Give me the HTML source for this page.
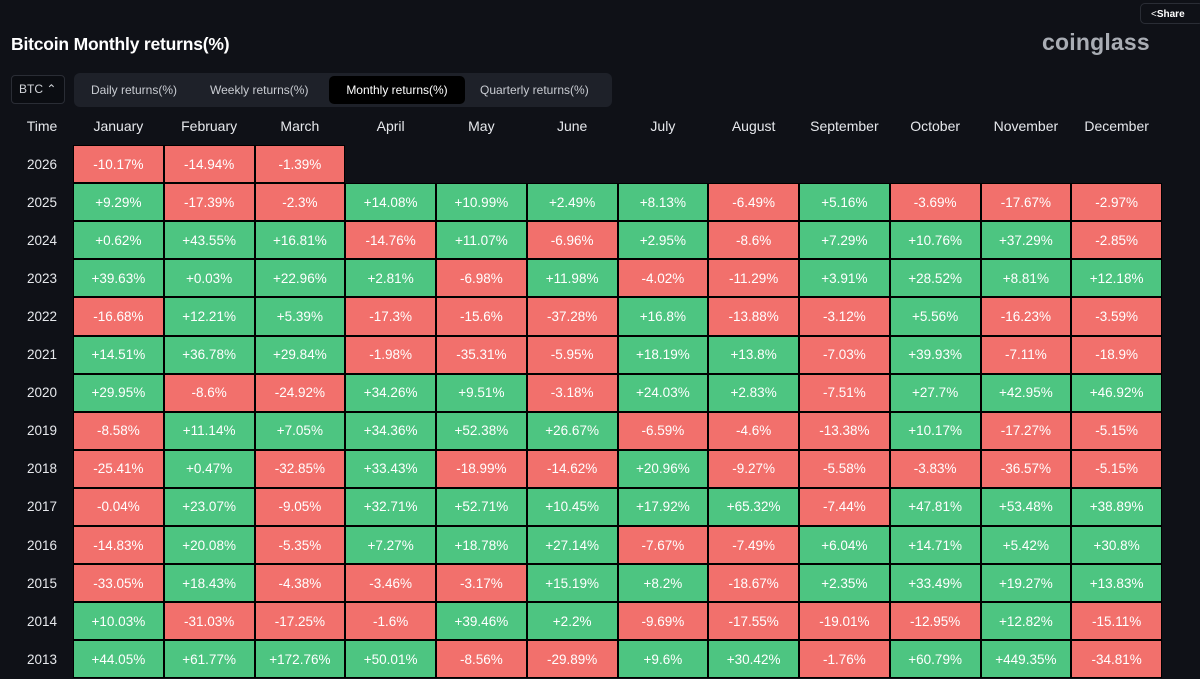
<!DOCTYPE html>
<html><head><meta charset="utf-8"><style>
body{margin:0;width:1200px;height:679px;background:#0f1117;overflow:hidden;font-family:"Liberation Sans",sans-serif;color:#e6e8ec;position:relative}
.title{position:absolute;left:11px;top:34px;font-size:17.5px;font-weight:bold;color:#fff;letter-spacing:-0.2px}
.logo{position:absolute;left:1042px;top:29px;font-size:23px;font-weight:bold;color:#a9adb4;letter-spacing:0.2px}
.share{position:absolute;left:1140px;top:3px;width:64px;height:21px;border:1px solid #2a2d35;border-radius:5px;font-size:10px;font-weight:bold;color:#fff;line-height:21px;padding-left:10px;box-sizing:border-box}
.btc{position:absolute;left:11px;top:75px;width:54px;height:29px;border:1px solid #2a2d35;border-radius:4px;box-sizing:border-box;background:#0b0d12;font-size:12px;line-height:27px;padding-left:7px;color:#d0d3d8}
.tabs{position:absolute;left:74px;top:73px;width:538px;height:34px;background:#1e2129;border-radius:6px}
.tab{position:absolute;top:3px;height:28px;line-height:28px;font-size:12px;color:#c9ccd2}
.tab.on{background:#000;border-radius:5px;color:#fff}
table{position:absolute;left:10px;top:106px;border-collapse:separate;border-spacing:2px;table-layout:fixed}
td,th{padding:0;text-align:center;font-size:13.5px;height:36.1px}
th{font-weight:normal;color:#e6e8ec;font-size:14px}
td.y{width:60px;color:#e6e8ec;font-size:13.5px}
td.r,td.g{color:#fff;box-shadow:0 0 0 1px #000}
td.r{background:#f2706c}
td.g{background:#4dc581}
col.m{width:88.75px}
</style></head><body>
<div class="share"><span style="font-weight:normal">&lt;</span>Share</div>
<div class="title">Bitcoin Monthly returns(%)</div>
<div class="logo">coinglass</div>
<div class="btc">BTC ⌃</div>
<div class="tabs">
<div class="tab" style="left:17px">Daily returns(%)</div>
<div class="tab" style="left:136px">Weekly returns(%)</div>
<div class="tab on" style="left:255px;width:136px;text-align:center">Monthly returns(%)</div>
<div class="tab" style="left:406px">Quarterly returns(%)</div>
</div>
<table>
<colgroup><col style="width:60px"><col class="m"><col class="m"><col class="m"><col class="m"><col class="m"><col class="m"><col class="m"><col class="m"><col class="m"><col class="m"><col class="m"><col class="m"></colgroup>
<tr><th>Time</th><th>January</th><th>February</th><th>March</th><th>April</th><th>May</th><th>June</th><th>July</th><th>August</th><th>September</th><th>October</th><th>November</th><th>December</th></tr>
<tr><td class="y">2026</td><td class="r">-10.17%</td><td class="r">-14.94%</td><td class="r">-1.39%</td><td></td><td></td><td></td><td></td><td></td><td></td><td></td><td></td><td></td></tr>
<tr><td class="y">2025</td><td class="g">+9.29%</td><td class="r">-17.39%</td><td class="r">-2.3%</td><td class="g">+14.08%</td><td class="g">+10.99%</td><td class="g">+2.49%</td><td class="g">+8.13%</td><td class="r">-6.49%</td><td class="g">+5.16%</td><td class="r">-3.69%</td><td class="r">-17.67%</td><td class="r">-2.97%</td></tr>
<tr><td class="y">2024</td><td class="g">+0.62%</td><td class="g">+43.55%</td><td class="g">+16.81%</td><td class="r">-14.76%</td><td class="g">+11.07%</td><td class="r">-6.96%</td><td class="g">+2.95%</td><td class="r">-8.6%</td><td class="g">+7.29%</td><td class="g">+10.76%</td><td class="g">+37.29%</td><td class="r">-2.85%</td></tr>
<tr><td class="y">2023</td><td class="g">+39.63%</td><td class="g">+0.03%</td><td class="g">+22.96%</td><td class="g">+2.81%</td><td class="r">-6.98%</td><td class="g">+11.98%</td><td class="r">-4.02%</td><td class="r">-11.29%</td><td class="g">+3.91%</td><td class="g">+28.52%</td><td class="g">+8.81%</td><td class="g">+12.18%</td></tr>
<tr><td class="y">2022</td><td class="r">-16.68%</td><td class="g">+12.21%</td><td class="g">+5.39%</td><td class="r">-17.3%</td><td class="r">-15.6%</td><td class="r">-37.28%</td><td class="g">+16.8%</td><td class="r">-13.88%</td><td class="r">-3.12%</td><td class="g">+5.56%</td><td class="r">-16.23%</td><td class="r">-3.59%</td></tr>
<tr><td class="y">2021</td><td class="g">+14.51%</td><td class="g">+36.78%</td><td class="g">+29.84%</td><td class="r">-1.98%</td><td class="r">-35.31%</td><td class="r">-5.95%</td><td class="g">+18.19%</td><td class="g">+13.8%</td><td class="r">-7.03%</td><td class="g">+39.93%</td><td class="r">-7.11%</td><td class="r">-18.9%</td></tr>
<tr><td class="y">2020</td><td class="g">+29.95%</td><td class="r">-8.6%</td><td class="r">-24.92%</td><td class="g">+34.26%</td><td class="g">+9.51%</td><td class="r">-3.18%</td><td class="g">+24.03%</td><td class="g">+2.83%</td><td class="r">-7.51%</td><td class="g">+27.7%</td><td class="g">+42.95%</td><td class="g">+46.92%</td></tr>
<tr><td class="y">2019</td><td class="r">-8.58%</td><td class="g">+11.14%</td><td class="g">+7.05%</td><td class="g">+34.36%</td><td class="g">+52.38%</td><td class="g">+26.67%</td><td class="r">-6.59%</td><td class="r">-4.6%</td><td class="r">-13.38%</td><td class="g">+10.17%</td><td class="r">-17.27%</td><td class="r">-5.15%</td></tr>
<tr><td class="y">2018</td><td class="r">-25.41%</td><td class="g">+0.47%</td><td class="r">-32.85%</td><td class="g">+33.43%</td><td class="r">-18.99%</td><td class="r">-14.62%</td><td class="g">+20.96%</td><td class="r">-9.27%</td><td class="r">-5.58%</td><td class="r">-3.83%</td><td class="r">-36.57%</td><td class="r">-5.15%</td></tr>
<tr><td class="y">2017</td><td class="r">-0.04%</td><td class="g">+23.07%</td><td class="r">-9.05%</td><td class="g">+32.71%</td><td class="g">+52.71%</td><td class="g">+10.45%</td><td class="g">+17.92%</td><td class="g">+65.32%</td><td class="r">-7.44%</td><td class="g">+47.81%</td><td class="g">+53.48%</td><td class="g">+38.89%</td></tr>
<tr><td class="y">2016</td><td class="r">-14.83%</td><td class="g">+20.08%</td><td class="r">-5.35%</td><td class="g">+7.27%</td><td class="g">+18.78%</td><td class="g">+27.14%</td><td class="r">-7.67%</td><td class="r">-7.49%</td><td class="g">+6.04%</td><td class="g">+14.71%</td><td class="g">+5.42%</td><td class="g">+30.8%</td></tr>
<tr><td class="y">2015</td><td class="r">-33.05%</td><td class="g">+18.43%</td><td class="r">-4.38%</td><td class="r">-3.46%</td><td class="r">-3.17%</td><td class="g">+15.19%</td><td class="g">+8.2%</td><td class="r">-18.67%</td><td class="g">+2.35%</td><td class="g">+33.49%</td><td class="g">+19.27%</td><td class="g">+13.83%</td></tr>
<tr><td class="y">2014</td><td class="g">+10.03%</td><td class="r">-31.03%</td><td class="r">-17.25%</td><td class="r">-1.6%</td><td class="g">+39.46%</td><td class="g">+2.2%</td><td class="r">-9.69%</td><td class="r">-17.55%</td><td class="r">-19.01%</td><td class="r">-12.95%</td><td class="g">+12.82%</td><td class="r">-15.11%</td></tr>
<tr><td class="y">2013</td><td class="g">+44.05%</td><td class="g">+61.77%</td><td class="g">+172.76%</td><td class="g">+50.01%</td><td class="r">-8.56%</td><td class="r">-29.89%</td><td class="g">+9.6%</td><td class="g">+30.42%</td><td class="r">-1.76%</td><td class="g">+60.79%</td><td class="g">+449.35%</td><td class="r">-34.81%</td></tr>
</table>
</body></html>
